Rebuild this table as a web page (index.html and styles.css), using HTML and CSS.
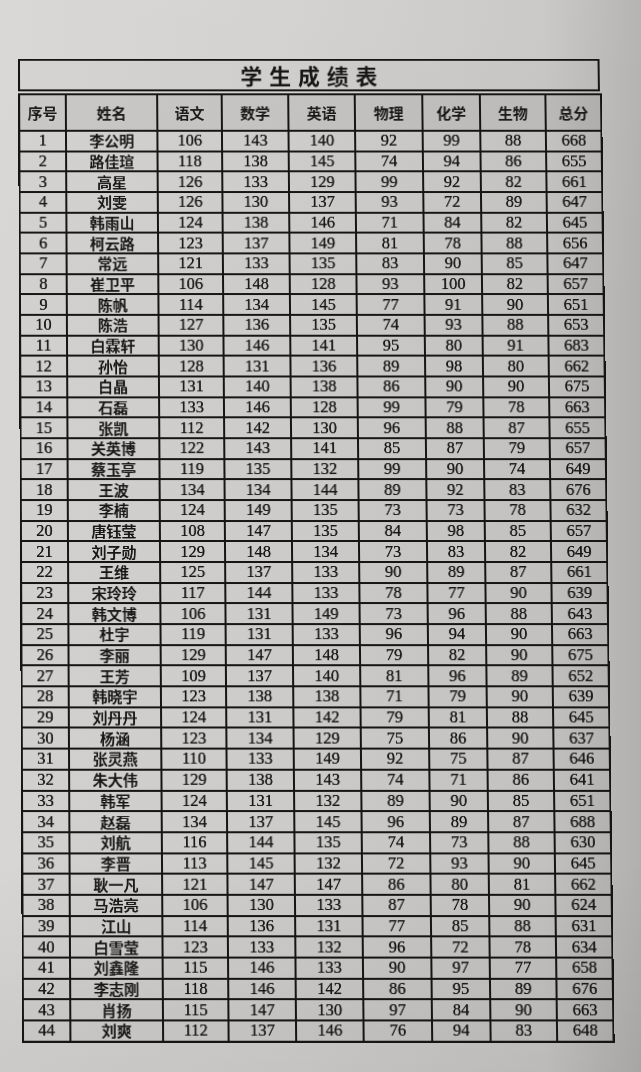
FILE: index.html
```html
<!DOCTYPE html>
<html lang="zh-CN">
<head>
<meta charset="utf-8">
<title>学生成绩表</title>
<link rel="stylesheet" href="styles.css">
</head>
<body>
<div class="sheet">
  <div class="title">学生成绩表</div>
  <table class="grades">
    <colgroup>
      <col class="c-no"><col class="c-name"><col class="c-yw"><col class="c-sx"><col class="c-yy"><col class="c-wl"><col class="c-hx"><col class="c-sw"><col class="c-zf">
    </colgroup>
    <thead>
      <tr><th>序号</th><th>姓名</th><th>语文</th><th>数学</th><th>英语</th><th>物理</th><th>化学</th><th>生物</th><th>总分</th></tr>
    </thead>
    <tbody>
      <tr><td>1</td><td class="nm">李公明</td><td>106</td><td>143</td><td>140</td><td>92</td><td>99</td><td>88</td><td>668</td></tr>
      <tr><td>2</td><td class="nm">路佳瑄</td><td>118</td><td>138</td><td>145</td><td>74</td><td>94</td><td>86</td><td>655</td></tr>
      <tr><td>3</td><td class="nm">高星</td><td>126</td><td>133</td><td>129</td><td>99</td><td>92</td><td>82</td><td>661</td></tr>
      <tr><td>4</td><td class="nm">刘雯</td><td>126</td><td>130</td><td>137</td><td>93</td><td>72</td><td>89</td><td>647</td></tr>
      <tr><td>5</td><td class="nm">韩雨山</td><td>124</td><td>138</td><td>146</td><td>71</td><td>84</td><td>82</td><td>645</td></tr>
      <tr><td>6</td><td class="nm">柯云路</td><td>123</td><td>137</td><td>149</td><td>81</td><td>78</td><td>88</td><td>656</td></tr>
      <tr><td>7</td><td class="nm">常远</td><td>121</td><td>133</td><td>135</td><td>83</td><td>90</td><td>85</td><td>647</td></tr>
      <tr><td>8</td><td class="nm">崔卫平</td><td>106</td><td>148</td><td>128</td><td>93</td><td>100</td><td>82</td><td>657</td></tr>
      <tr><td>9</td><td class="nm">陈帆</td><td>114</td><td>134</td><td>145</td><td>77</td><td>91</td><td>90</td><td>651</td></tr>
      <tr><td>10</td><td class="nm">陈浩</td><td>127</td><td>136</td><td>135</td><td>74</td><td>93</td><td>88</td><td>653</td></tr>
      <tr><td>11</td><td class="nm">白霖轩</td><td>130</td><td>146</td><td>141</td><td>95</td><td>80</td><td>91</td><td>683</td></tr>
      <tr><td>12</td><td class="nm">孙怡</td><td>128</td><td>131</td><td>136</td><td>89</td><td>98</td><td>80</td><td>662</td></tr>
      <tr><td>13</td><td class="nm">白晶</td><td>131</td><td>140</td><td>138</td><td>86</td><td>90</td><td>90</td><td>675</td></tr>
      <tr><td>14</td><td class="nm">石磊</td><td>133</td><td>146</td><td>128</td><td>99</td><td>79</td><td>78</td><td>663</td></tr>
      <tr><td>15</td><td class="nm">张凯</td><td>112</td><td>142</td><td>130</td><td>96</td><td>88</td><td>87</td><td>655</td></tr>
      <tr><td>16</td><td class="nm">关英博</td><td>122</td><td>143</td><td>141</td><td>85</td><td>87</td><td>79</td><td>657</td></tr>
      <tr><td>17</td><td class="nm">蔡玉亭</td><td>119</td><td>135</td><td>132</td><td>99</td><td>90</td><td>74</td><td>649</td></tr>
      <tr><td>18</td><td class="nm">王波</td><td>134</td><td>134</td><td>144</td><td>89</td><td>92</td><td>83</td><td>676</td></tr>
      <tr><td>19</td><td class="nm">李楠</td><td>124</td><td>149</td><td>135</td><td>73</td><td>73</td><td>78</td><td>632</td></tr>
      <tr><td>20</td><td class="nm">唐钰莹</td><td>108</td><td>147</td><td>135</td><td>84</td><td>98</td><td>85</td><td>657</td></tr>
      <tr><td>21</td><td class="nm">刘子勋</td><td>129</td><td>148</td><td>134</td><td>73</td><td>83</td><td>82</td><td>649</td></tr>
      <tr><td>22</td><td class="nm">王维</td><td>125</td><td>137</td><td>133</td><td>90</td><td>89</td><td>87</td><td>661</td></tr>
      <tr><td>23</td><td class="nm">宋玲玲</td><td>117</td><td>144</td><td>133</td><td>78</td><td>77</td><td>90</td><td>639</td></tr>
      <tr><td>24</td><td class="nm">韩文博</td><td>106</td><td>131</td><td>149</td><td>73</td><td>96</td><td>88</td><td>643</td></tr>
      <tr><td>25</td><td class="nm">杜宇</td><td>119</td><td>131</td><td>133</td><td>96</td><td>94</td><td>90</td><td>663</td></tr>
      <tr><td>26</td><td class="nm">李丽</td><td>129</td><td>147</td><td>148</td><td>79</td><td>82</td><td>90</td><td>675</td></tr>
      <tr><td>27</td><td class="nm">王芳</td><td>109</td><td>137</td><td>140</td><td>81</td><td>96</td><td>89</td><td>652</td></tr>
      <tr><td>28</td><td class="nm">韩晓宇</td><td>123</td><td>138</td><td>138</td><td>71</td><td>79</td><td>90</td><td>639</td></tr>
      <tr><td>29</td><td class="nm">刘丹丹</td><td>124</td><td>131</td><td>142</td><td>79</td><td>81</td><td>88</td><td>645</td></tr>
      <tr><td>30</td><td class="nm">杨涵</td><td>123</td><td>134</td><td>129</td><td>75</td><td>86</td><td>90</td><td>637</td></tr>
      <tr><td>31</td><td class="nm">张灵燕</td><td>110</td><td>133</td><td>149</td><td>92</td><td>75</td><td>87</td><td>646</td></tr>
      <tr><td>32</td><td class="nm">朱大伟</td><td>129</td><td>138</td><td>143</td><td>74</td><td>71</td><td>86</td><td>641</td></tr>
      <tr><td>33</td><td class="nm">韩军</td><td>124</td><td>131</td><td>132</td><td>89</td><td>90</td><td>85</td><td>651</td></tr>
      <tr><td>34</td><td class="nm">赵磊</td><td>134</td><td>137</td><td>145</td><td>96</td><td>89</td><td>87</td><td>688</td></tr>
      <tr><td>35</td><td class="nm">刘航</td><td>116</td><td>144</td><td>135</td><td>74</td><td>73</td><td>88</td><td>630</td></tr>
      <tr><td>36</td><td class="nm">李晋</td><td>113</td><td>145</td><td>132</td><td>72</td><td>93</td><td>90</td><td>645</td></tr>
      <tr><td>37</td><td class="nm">耿一凡</td><td>121</td><td>147</td><td>147</td><td>86</td><td>80</td><td>81</td><td>662</td></tr>
      <tr><td>38</td><td class="nm">马浩亮</td><td>106</td><td>130</td><td>133</td><td>87</td><td>78</td><td>90</td><td>624</td></tr>
      <tr><td>39</td><td class="nm">江山</td><td>114</td><td>136</td><td>131</td><td>77</td><td>85</td><td>88</td><td>631</td></tr>
      <tr><td>40</td><td class="nm">白雪莹</td><td>123</td><td>133</td><td>132</td><td>96</td><td>72</td><td>78</td><td>634</td></tr>
      <tr><td>41</td><td class="nm">刘鑫隆</td><td>115</td><td>146</td><td>133</td><td>90</td><td>97</td><td>77</td><td>658</td></tr>
      <tr><td>42</td><td class="nm">李志刚</td><td>118</td><td>146</td><td>142</td><td>86</td><td>95</td><td>89</td><td>676</td></tr>
      <tr><td>43</td><td class="nm">肖扬</td><td>115</td><td>147</td><td>130</td><td>97</td><td>84</td><td>90</td><td>663</td></tr>
      <tr><td>44</td><td class="nm">刘爽</td><td>112</td><td>137</td><td>146</td><td>76</td><td>94</td><td>83</td><td>648</td></tr>
    </tbody>
  </table>
</div>
</body>
</html>
```
FILE: styles.css
```css
html, body {
  margin: 0;
  padding: 0;
}
body {
  width: 641px;
  height: 1072px;
  overflow: hidden;
  background:
    linear-gradient(to bottom, rgba(255,255,255,0.06) 0%, rgba(255,255,255,0) 30%, rgba(0,0,0,0) 80%, rgba(0,0,0,0.06) 100%),
    linear-gradient(to right, #d8d6d4 0%, #d2d0ce 45%, #c8c6c4 85%, #b2b0ae 100%);
  color: #1c1c1c;
}
.sheet {
  width: 586px;
  margin: 55px 0 0 20px;
  display: flex;
  flex-direction: column;
  gap: 2px;
  transform-origin: 50% 50%;
  transform: perspective(1000px) rotateX(0.9deg) skewX(0.5deg);
}
.title {
  box-sizing: border-box;
  height: 33px;
  border: 2px solid #151515;
  text-align: center;
  font-family: "Noto Sans CJK SC", "Noto Sans", sans-serif;
  font-weight: 700;
  font-size: 22px;
  line-height: 29px;
  letter-spacing: 7px;
  padding-left: 7px;
  color: #161616;
  background: rgba(0,0,0,0.015);
}
.grades {
  width: 586px;
  table-layout: fixed;
  border-collapse: collapse;
  border: 2px solid #151515;
}
.c-no { width: 47px; }
.c-name { width: 92px; }
.c-yw { width: 65px; }
.c-sx { width: 67px; }
.c-yy { width: 67px; }
.c-wl { width: 68px; }
.c-hx { width: 58px; }
.c-sw { width: 66px; }
.c-zf { width: 56px; }
.grades th,
.grades td {
  border: 2px solid #151515;
  padding: 0;
  text-align: center;
  vertical-align: middle;
  overflow: hidden;
  white-space: nowrap;
}
.grades thead tr {
  height: 37px;
}
.grades th {
  font-family: "Noto Sans CJK SC", "Noto Sans", sans-serif;
  font-weight: 700;
  font-size: 15px;
  color: #181818;
  background: rgba(0,0,0,0.07);
}
.grades tbody tr {
  height: 20.68px;
}
.grades td {
  font-family: "Liberation Serif", "Times New Roman", serif;
  font-size: 16.5px;
  line-height: 16px;
  color: #161616;
  text-shadow: 0 0 0.5px #161616;
  background: rgba(0,0,0,0.025);
}
.grades td.nm {
  font-family: "Noto Sans CJK SC", "Noto Sans", sans-serif;
  font-size: 15px;
  font-weight: 500;
  text-shadow: 0 0 0.6px #161616;
}
```
